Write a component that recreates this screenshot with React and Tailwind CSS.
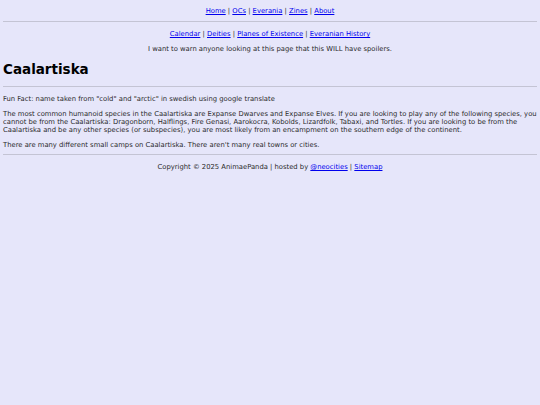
import React from 'react';

const mainLinks = ['Home', 'OCs', 'Everania', 'Zines', 'About'];
const loreLinks = ['Calendar', 'Deities', 'Planes of Existence', 'Everanian History'];

function LinkRow({ links, className }) {
  return (
    <div className={`text-center ${className}`}>
      {links.map((label, i) => (
        <React.Fragment key={label}>
          {i > 0 ? ' | ' : null}
          <a href="#" className="text-[#0000ee] underline">{label}</a>
        </React.Fragment>
      ))}
    </div>
  );
}

export default function App() {
  return (
    <div className="min-h-[405px] bg-[#e6e6fa] px-[3px] text-[6.8px] leading-[8px] text-[#2a2a2a] [font-family:'DejaVu_Sans',Verdana,sans-serif]">
      <LinkRow links={mainLinks} className="pt-[7px]" />
      <hr className="mt-[6px] border-t border-[#c4c4d4]" />
      <LinkRow links={loreLinks} className="mt-[8px]" />
      <p className="mt-[7px] text-center">I want to warn anyone looking at this page that this WILL have spoilers.</p>

      <h1 className="mt-[7px] text-[13.5px] leading-[18px] font-bold text-black">Caalartiska</h1>
      <hr className="mt-[8px] border-t border-[#c4c4d4]" />

      <p className="mt-[8px]">Fun Fact: name taken from "cold" and "arctic" in swedish using google translate</p>
      <p className="mt-[7px]">
        The most common humanoid species in the Caalartiska are Expanse Dwarves and Expanse Elves. If you are looking to play any of the following species, you cannot be from the Caalartiska: Dragonborn, Halflings, Fire Genasi, Aarokocra, Kobolds, Lizardfolk, Tabaxi, and Tortles. If you are looking to be from the Caalartiska and be any other species (or subspecies), you are most likely from an encampment on the southern edge of the continent.
      </p>
      <p className="mt-[7px]">There are many different small camps on Caalartiska. There aren't many real towns or cities.</p>

      <hr className="mt-[5px] border-t border-[#c4c4d4]" />
      <p className="mt-[8px] text-center">
        Copyright © 2025 AnimaePanda | hosted by <a href="#" className="text-[#0000ee] underline">@neocities</a> | <a href="#" className="text-[#0000ee] underline">Sitemap</a>
      </p>
    </div>
  );
}
